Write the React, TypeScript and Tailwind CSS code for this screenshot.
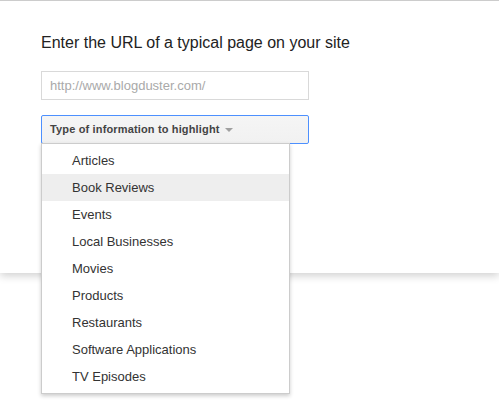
import React from "react";

const items = [
  "Articles",
  "Book Reviews",
  "Events",
  "Local Businesses",
  "Movies",
  "Products",
  "Restaurants",
  "Software Applications",
  "TV Episodes",
];

export default function App() {
  return (
    <div className="w-[499px] h-[414px] bg-white overflow-hidden" style={{ fontFamily: '"Liberation Sans", Arial, sans-serif' }}>
      <div className="border-t border-[#cccccc] bg-white h-[273px] shadow-[0_3px_8px_rgba(0,0,0,0.18)] pl-[41px] pt-[31px] relative">
        <h1 className="text-[16px] leading-[22px] text-[#222222] font-normal">Enter the URL of a typical page on your site</h1>
        <div className="mt-[17px] w-[268px] h-[29px] border border-[#d9d9d9] flex items-center pl-[8px] text-[13px] text-[#a9a9a9]">
          http://www.blogduster.com/
        </div>
        <div className="relative mt-[15px] w-[268px]">
          <div className="h-[29px] border border-[#4d90fe] rounded-[2px] bg-gradient-to-b from-[#f5f5f5] to-[#f1f1f1] flex items-center pl-[8px] text-[11px] font-bold text-[#444444] tracking-[0.15px]">
            <span>Type of information to highlight</span>
            <span className="ml-[5px] w-0 h-0 border-l-[4px] border-r-[4px] border-t-[4px] border-l-transparent border-r-transparent border-t-[#a0a0a0]" />
          </div>
          <div className="absolute left-0 top-[28px] w-[249px] bg-white border border-[#cccccc] shadow-[0_2px_4px_rgba(0,0,0,0.2)] pt-[3px] pb-[3px] z-10">
            {items.map((it) => (
              <div
                key={it}
                className={`h-[27px] flex items-center pl-[30px] text-[13px] text-[#333333] ${it === "Book Reviews" ? "bg-[#eeeeee]" : ""}`}
              >
                {it}
              </div>
            ))}
          </div>
        </div>
      </div>
    </div>
  );
}
